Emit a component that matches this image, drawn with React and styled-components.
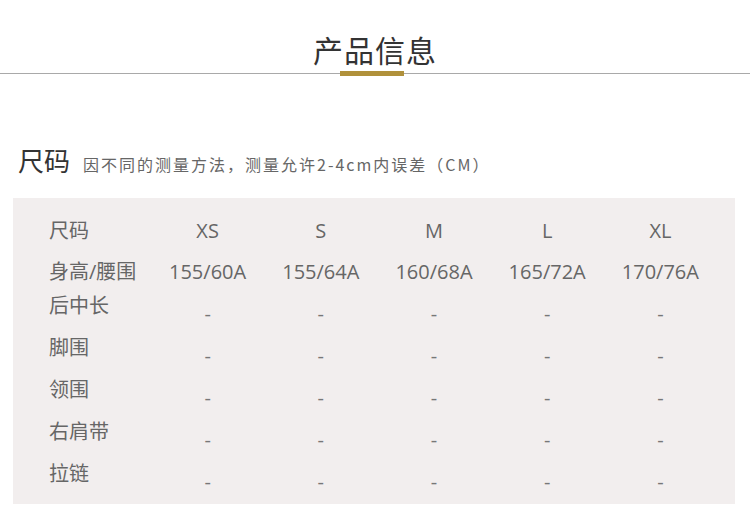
import styled, { createGlobalStyle } from "styled-components";

const GlobalStyle = createGlobalStyle`
  body {
    margin: 0;
    background: #fff;
    font-family: "Open Sans", "Noto Sans CJK SC", sans-serif;
  }
`;

const Page = styled.div`
  width: 750px;
  height: 520px;
  overflow: hidden;
  background: #fff;
`;

const Title = styled.h1`
  margin: 0;
  padding-top: 29px;
  font-size: 30px;
  font-weight: 400;
  line-height: 40px;
  letter-spacing: 1px;
  text-align: center;
  color: #333;
  font-family: "Noto Sans CJK SC", sans-serif;
`;

const Rule = styled.div`
  margin-top: 2px;
  height: 5px;
  display: flex;
  justify-content: center;
  background: linear-gradient(#a9a9a9, #a9a9a9) center / 100% 1px no-repeat;
`;

const GoldBar = styled.div`
  width: 64px;
  height: 5px;
  margin-right: 6px;
  background: #b0913b;
`;

const Heading = styled.div`
  display: flex;
  align-items: baseline;
  margin-top: 68px;
  padding-left: 18px;
  font-family: "Noto Sans CJK SC", sans-serif;

  h2 {
    margin: 0 13px 0 0;
    font-size: 26px;
    line-height: 32px;
    font-weight: 400;
    color: #333;
  }

  span {
    font-size: 16px;
    line-height: 20px;
    letter-spacing: 2px;
    color: #666;
  }
`;

const Panel = styled.div`
  margin: 22px 15px 0 13px;
  padding: 13px 18px 1px 36px;
  background: #f2eeee;
`;

const Row = styled.div`
  display: grid;
  grid-template-columns: 102px repeat(5, 1fr);
  height: ${(p) => p.$h}px;
  font-size: 20px;
  color: #666;
`;

const Label = styled.div`
  line-height: ${(p) => (p.$top ? "26px" : `${p.$h}px`)};
  white-space: nowrap;
`;

const Cell = styled.div`
  text-align: center;
  line-height: ${(p) => p.$h}px;
`;

const Dash = styled.div`
  text-align: center;
  line-height: 42px;
  color: #777;
`;

const sizes = ["XS", "S", "M", "L", "XL"];
const specs = ["155/60A", "155/64A", "160/68A", "165/72A", "170/76A"];
const measures = ["后中长", "脚围", "领围", "右肩带", "拉链"];

export default function App() {
  return (
    <Page>
      <GlobalStyle />
      <Title>产品信息</Title>
      <Rule>
        <GoldBar />
      </Rule>
      <Heading>
        <h2>尺码</h2>
        <span>因不同的测量方法，测量允许2-4cm内误差（CM）</span>
      </Heading>
      <Panel>
        <Row $h={40}>
          <Label $h={40}>尺码</Label>
          {sizes.map((s) => (
            <Cell key={s} $h={40}>
              {s}
            </Cell>
          ))}
        </Row>
        <Row $h={42}>
          <Label $h={42}>身高/腰围</Label>
          {specs.map((s) => (
            <Cell key={s} $h={42}>
              {s}
            </Cell>
          ))}
        </Row>
        {measures.map((m) => (
          <Row key={m} $h={42}>
            <Label $top>{m}</Label>
            {sizes.map((s) => (
              <Dash key={s}>-</Dash>
            ))}
          </Row>
        ))}
      </Panel>
    </Page>
  );
}
